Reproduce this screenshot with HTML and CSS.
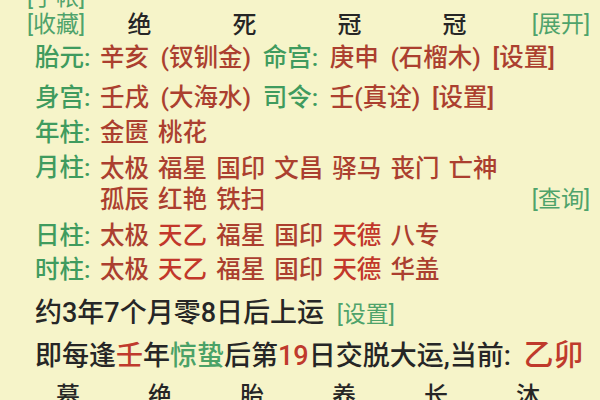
FILE: index.html
```html
<!DOCTYPE html>
<html lang="zh-CN">
<head>
<meta charset="utf-8">
<title>八字排盘</title>
<link rel="stylesheet" href="styles.css">
</head>
<body>
<div class="page">
  <div class="row r0"><span class="tag">[手帐]</span></div>
  <div class="row r1 cols">
    <span class="tag">[收藏]</span>
    <span class="cell">绝</span>
    <span class="cell">死</span>
    <span class="cell">冠</span>
    <span class="cell">冠</span>
    <span class="tag end">[展开]</span>
  </div>
  <div class="row info wide r2">
    <span class="lab">胎元:</span>
    <span class="val">辛亥 (钗钏金) <span class="lab">命宫:</span> 庚申 (石榴木) [设置]</span>
  </div>
  <div class="row info wide r3">
    <span class="lab">身宫:</span>
    <span class="val">壬戌 (大海水) <span class="lab">司令:</span> 壬(真诠) [设置]</span>
  </div>
  <div class="row info r4">
    <span class="lab">年柱:</span>
    <span class="val">金匮 桃花</span>
  </div>
  <div class="row info r5">
    <span class="lab">月柱:</span>
    <div class="val multi">
      <div class="line">太极 福星 国印 文昌 驿马 丧门 亡神</div>
      <div class="line split"><span>孤辰 红艳 铁扫</span><span class="tag">[查询]</span></div>
    </div>
  </div>
  <div class="row info r6">
    <span class="lab">日柱:</span>
    <span class="val">太极 <span class="hi">天乙</span> 福星 国印 <span class="hi">天德</span> 八专</span>
  </div>
  <div class="row info r7">
    <span class="lab">时柱:</span>
    <span class="val">太极 <span class="hi">天乙</span> 福星 国印 <span class="hi">天德</span> 华盖</span>
  </div>
  <div class="row big r8">约3年7个月零8日后上运 <span class="tag small">[设置]</span></div>
  <div class="row big r9">即每逢<span class="red">壬</span>年<span class="grn">惊蛰</span>后第<span class="red">19</span>日交脱大运,当前: <span class="red cur">乙卯</span></div>
  <div class="row r10 luck">
    <span class="cell">墓</span>
    <span class="cell">绝</span>
    <span class="cell">胎</span>
    <span class="cell">养</span>
    <span class="cell">长</span>
    <span class="cell">沐</span>
  </div>
</div>
</body>
</html>
```
FILE: styles.css
```css
html, body {
  margin: 0;
  padding: 0;
  background: #f6f4c9;
}
body {
  width: 600px;
  height: 400px;
  overflow: hidden;
  font-family: Roboto, "Noto Sans CJK SC", sans-serif;
  font-weight: 500;
  color: #262626;
}
.page {
  margin-top: -18px;
  padding-right: 10px;
}
.row {
  font-size: 24.5px;
  line-height: 30px;
  height: 30px;
  white-space: nowrap;
}
.tag {
  color: #4fa36b;
  font-size: 23px;
  font-weight: 400;
}
.r0 { padding-left: 27px; }
.cols {
  display: grid;
  grid-template-columns: 60px repeat(4, 105px) 1fr;
  padding-left: 27px;
  margin-top: -2px;
}
.cols .cell {
  text-align: center;
  font-size: 24px;
}
.cols .end {
  justify-self: end;
}
.info {
  display: flex;
  padding-left: 35px;
  word-spacing: 3px;
}
.info.wide { word-spacing: 5.5px; }
.info > .lab {
  width: 65px;
  flex: none;
}
.lab { color: #3f9b5e; }
.val { color: #ab3f2f; flex: 1; }
.hi { color: #c2372a; }
.multi { height: auto; }
.r5 { height: 62px; }
.multi .line { line-height: 31px; height: 31px; }
.split {
  display: flex;
  justify-content: space-between;
}
.split .tag { word-spacing: 0; }
.r2 { margin-top: 3px; }
.r3 { margin-top: 10px; }
.r4 { margin-top: 5px; }
.r5 { margin-top: 5px; }
.r6 { margin-top: 6px; }
.r7 { margin-top: 4px; }
.big {
  font-size: 27px;
  padding-left: 35px;
}
.big .small { font-size: 23px; margin-left: 6px; }
.r8 { margin-top: 13px; }
.r9 { margin-top: 12px; }
.red { color: #bf3a2c; }
.grn { color: #4aa267; }
.cur {
  font-size: 30px;
  line-height: 1;
  margin-left: 6px;
}
.luck {
  display: grid;
  grid-template-columns: repeat(6, 92px);
  padding-left: 22px;
  margin-top: 11px;
}
.luck .cell {
  text-align: center;
  font-size: 24px;
}
```
